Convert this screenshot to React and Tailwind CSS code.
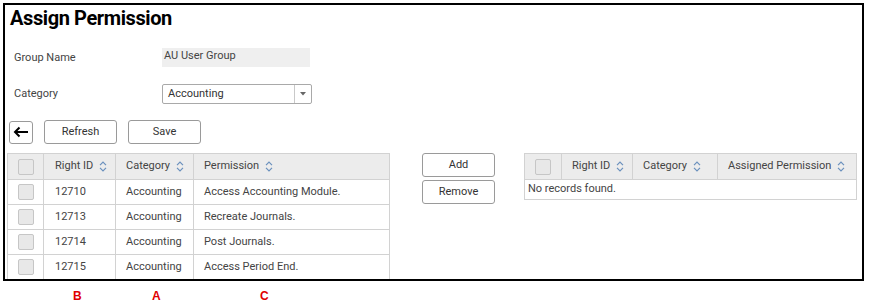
import React from "react";

function SortIcon() {
  return (
    <svg width="8" height="11" viewBox="0 0 8 11" className="ml-[6px] inline-block">
      <path d="M1 4.2 L4 1.2 L7 4.2" fill="none" stroke="#6a90bd" strokeWidth="1.2" />
      <path d="M1 6.8 L4 9.8 L7 6.8" fill="none" stroke="#6a90bd" strokeWidth="1.2" />
    </svg>
  );
}

function Check() {
  return <div className="w-[16px] h-[16px] bg-[#e8e8e8] border border-[#c6c6c6] rounded-[2px]" />;
}

function Btn({ children, w = "w-[73px]" }) {
  return (
    <button className={`${w} h-[24px] bg-white border border-[#9a9a9a] rounded-[3px] text-[11px] text-[#333] flex items-center justify-center`}>
      {children}
    </button>
  );
}

const rows = [
  ["12710", "Accounting", "Access Accounting Module."],
  ["12713", "Accounting", "Recreate Journals."],
  ["12714", "Accounting", "Post Journals."],
  ["12715", "Accounting", "Access Period End."],
];

export default function App() {
  return (
    <div className="w-[869px] h-[306px] bg-white pt-[3px] pl-[3px] text-[#444]" style={{ fontFamily: "Roboto, Arial, sans-serif" }}>
      <div className="w-[861px] h-[278px] border-2 border-black overflow-hidden">
        <h1 className="pl-[5px] pt-[3px] text-[20px] leading-[21px] font-bold tracking-[-0.4px] text-black">Assign Permission</h1>

        {/* form fields */}
        <div className="mt-[19px] flex items-center pl-[9px] text-[11px]">
          <div className="w-[148px] pt-[2px]">Group Name</div>
          <div className="w-[148px] h-[19px] bg-[#efefef] pl-[2px] pt-[1px] leading-[13px]">AU User Group</div>
        </div>
        <div className="mt-[17px] flex items-center pl-[9px] text-[11px]">
          <div className="w-[148px]">Category</div>
          <div className="w-[150px] h-[20px] border border-[#a9a9a9] rounded-[2px] flex items-center">
            <div className="flex-1 pl-[5px] text-[#333]">Accounting</div>
            <div className="w-[17px] h-full border-l border-[#c9c9c9] flex items-center justify-center">
              <svg width="6" height="4" viewBox="0 0 6 4"><path d="M0 0 L6 0 L3 3.5 Z" fill="#666" /></svg>
            </div>
          </div>
        </div>

        {/* toolbar */}
        <div className="mt-[16px] pl-[4px] flex items-center gap-[11px]">
          <button className="w-[24px] h-[23px] bg-white border border-[#9a9a9a] rounded-[3px] flex items-center justify-center">
            <svg width="16" height="12" viewBox="0 0 16 12">
              <path d="M15 6 H2 M6.5 1.5 L2 6 L6.5 10.5" fill="none" stroke="#000" strokeWidth="2" />
            </svg>
          </button>
          <Btn>Refresh</Btn>
          <Btn>Save</Btn>
        </div>

        {/* tables */}
        <div className="mt-[9px] pl-[2px] flex items-start text-[11px]">
          <table className="w-[383px] border-collapse border border-[#d2d2d2] table-fixed">
            <colgroup>
              <col className="w-[36px]" />
              <col className="w-[72px]" />
              <col className="w-[78px]" />
              <col />
            </colgroup>
            <thead>
              <tr className="h-[26px] bg-[#ececec]">
                <th className="border border-[#d2d2d2]"><div className="flex justify-center"><Check /></div></th>
                <th className="border border-[#d2d2d2] text-left font-normal pl-[11px]">Right ID<SortIcon /></th>
                <th className="border border-[#d2d2d2] text-left font-normal pl-[10px]">Category<SortIcon /></th>
                <th className="border border-[#d2d2d2] text-left font-normal pl-[10px]">Permission<SortIcon /></th>
              </tr>
            </thead>
            <tbody>
              {rows.map((r) => (
                <tr key={r[0]} className="h-[25px]">
                  <td className="border border-[#d2d2d2]"><div className="flex justify-center"><Check /></div></td>
                  <td className="border border-[#d2d2d2] pl-[11px]">{r[0]}</td>
                  <td className="border border-[#d2d2d2] pl-[10px]">{r[1]}</td>
                  <td className="border border-[#d2d2d2] pl-[10px]">{r[2]}</td>
                </tr>
              ))}
            </tbody>
          </table>

          <div className="ml-[32px] flex flex-col gap-[3px]">
            <Btn>Add</Btn>
            <Btn>Remove</Btn>
          </div>

          <table className="ml-[29px] w-[333px] border-collapse border border-[#d2d2d2] table-fixed">
            <colgroup>
              <col className="w-[37px]" />
              <col className="w-[71px]" />
              <col className="w-[85px]" />
              <col />
            </colgroup>
            <thead>
              <tr className="h-[26px] bg-[#ececec]">
                <th className="border border-[#d2d2d2]"><div className="flex justify-center"><Check /></div></th>
                <th className="border border-[#d2d2d2] text-left font-normal pl-[10px]">Right ID<SortIcon /></th>
                <th className="border border-[#d2d2d2] text-left font-normal pl-[10px]">Category<SortIcon /></th>
                <th className="border border-[#d2d2d2] text-left font-normal pl-[10px]">Assigned Permission<SortIcon /></th>
              </tr>
            </thead>
            <tbody>
              <tr className="h-[20px]">
                <td colSpan={4} className="border border-[#d2d2d2] pl-[3px]">No records found.</td>
              </tr>
            </tbody>
          </table>
        </div>
      </div>

      <div className="mt-[9px] pl-[70px] flex text-[12px] font-bold text-[#e00000] leading-none" style={{ fontFamily: "Arial, 'Liberation Sans', sans-serif" }}>
        <span className="w-[79px]">B</span>
        <span className="w-[108px]">A</span>
        <span>C</span>
      </div>
    </div>
  );
}
